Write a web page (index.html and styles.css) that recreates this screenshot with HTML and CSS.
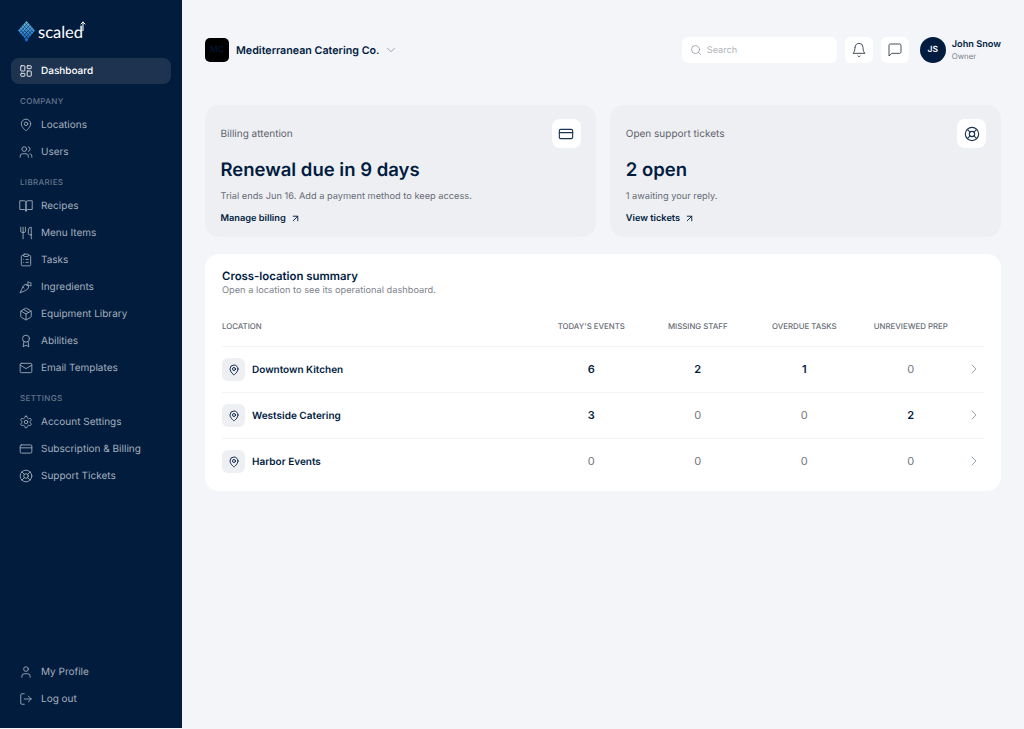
FILE: index.html
```html
<!DOCTYPE html>
<html lang="en">
<head>
    <meta charset="UTF-8">
    <meta name="viewport" content="width=device-width, initial-scale=1.0">
    <title>Dashboard</title>
    <link rel="stylesheet" href="styles.css">
</head>
<body>
    <aside class="sidebar">
        <div class="logo">
            <svg class="logo-mark" viewBox="0 0 20 22" width="17" height="21" preserveAspectRatio="none">
                <defs>
                    <linearGradient id="tile" gradientUnits="userSpaceOnUse" x1="10" y1="0" x2="10" y2="22">
                        <stop offset="0" stop-color="#6fc0dc"/>
                        <stop offset="0.55" stop-color="#3a8fd8"/>
                        <stop offset="1" stop-color="#0f62d0"/>
                    </linearGradient>
                </defs>
                <g fill="url(#tile)">
                    <path d="M10 0l1.800 1.800L10 3.600 8.200 1.800z"/>
                    <path d="M7.900 2.100l1.800 1.800-1.800 1.800-1.800-1.800zM12.100 2.100l1.800 1.800-1.800 1.800-1.800-1.800z"/>
                    <path d="M5.800 4.200l1.800 1.800-1.800 1.800L4 6zM10 4.200L11.800 6 10 7.800 8.200 6zM14.200 4.200L16 6l-1.800 1.800L12.400 6z"/>
                    <path d="M3.700 6.300l1.800 1.800-1.800 1.800-1.800-1.800zM7.900 6.300l1.800 1.800-1.800 1.800-1.800-1.800zM12.100 6.300l1.800 1.800-1.800 1.800-1.800-1.800zM16.300 6.300l1.800 1.800-1.800 1.800-1.800-1.800z"/>
                    <path d="M1.800 8.300L3.600 10l-1.800 1.800L0 10zM5.800 8.300L7.600 10l-1.800 1.800L4 10zM10 8.300l1.800 1.700-1.800 1.800L8.200 10zM14.200 8.300L16 10l-1.800 1.800-1.800-1.800zM18.200 8.300L20 10l-1.800 1.800-1.800-1.800z"/>
                    <path d="M3.700 10.400l1.800 1.800-1.800 1.800-1.800-1.800zM7.900 10.400l1.800 1.800-1.800 1.800-1.800-1.800zM12.100 10.400l1.800 1.800-1.800 1.800-1.800-1.800zM16.300 10.400l1.800 1.800-1.800 1.800-1.800-1.800z"/>
                    <path d="M5.800 12.500l1.800 1.800-1.800 1.800L4 14.300zM10 12.500l1.800 1.800-1.800 1.800-1.800-1.800zM14.200 12.500l1.800 1.800-1.800 1.800-1.800-1.800z"/>
                    <path d="M7.900 14.600l1.800 1.800-1.800 1.800-1.800-1.800zM12.100 14.600l1.800 1.800-1.800 1.800-1.800-1.800z"/>
                    <path d="M10 17l2.300 2.500L10 22l-2.300-2.500z"/>
                </g>
            </svg>
            <span class="logo-text">scaled</span>
            <svg class="logo-arrow" viewBox="0 0 6 10" width="6" height="10"><path d="M3 10V1M1 3l2-2 2 2" stroke="#fff" stroke-width="1"/></svg>
        </div>

        <nav class="nav">
            <a class="nav-item active">
                <svg class="icon" viewBox="0 0 24 24"><rect x="3" y="3" width="7" height="9" rx="1"/><rect x="14" y="3" width="7" height="5" rx="1"/><rect x="14" y="12" width="7" height="9" rx="1"/><rect x="3" y="16" width="7" height="5" rx="1"/></svg>
                Dashboard
            </a>

            <div class="nav-label">COMPANY</div>
            <a class="nav-item">
                <svg class="icon" viewBox="0 0 24 24"><path d="M20 10c0 6-8 12-8 12s-8-6-8-12a8 8 0 0 1 16 0Z"/><circle cx="12" cy="10" r="3"/></svg>
                Locations
            </a>
            <a class="nav-item">
                <svg class="icon" viewBox="0 0 24 24"><path d="M16 21v-2a4 4 0 0 0-4-4H6a4 4 0 0 0-4 4v2"/><circle cx="9" cy="7" r="4"/><path d="M22 21v-2a4 4 0 0 0-3-3.870"/><path d="M16 3.130a4 4 0 0 1 0 7.750"/></svg>
                Users
            </a>

            <div class="nav-label">LIBRARIES</div>
            <a class="nav-item">
                <svg class="icon" viewBox="0 0 24 24"><path d="M2 3h7a3 3 0 0 1 3 3v15a3 3 0 0 0-3-3H2Z"/><path d="M22 3h-7a3 3 0 0 0-3 3v15a3 3 0 0 1 3-3h7Z"/></svg>
                Recipes
            </a>
            <a class="nav-item">
                <svg class="icon" viewBox="0 0 24 24"><path d="M3 2v7c0 1.100.9 2 2 2h4a2 2 0 0 0 2-2V2"/><path d="M7 2v20"/><path d="M21 15V2a5 5 0 0 0-5 5v6c0 1.100.9 2 2 2h3Zm0 0v7"/></svg>
                Menu Items
            </a>
            <a class="nav-item">
                <svg class="icon" viewBox="0 0 24 24"><rect x="8" y="2" width="8" height="4" rx="1"/><path d="M16 4h2a2 2 0 0 1 2 2v14a2 2 0 0 1-2 2H6a2 2 0 0 1-2-2V6a2 2 0 0 1 2-2h2"/><path d="M12 11h4M12 16h4M8 11h.01M8 16h.01"/></svg>
                Tasks
            </a>
            <a class="nav-item">
                <svg class="icon" viewBox="0 0 24 24"><path d="M2.270 21.700s9.870-3.500 12.730-6.360a4.500 4.500 0 0 0-6.360-6.370C5.770 11.840 2.270 21.700 2.270 21.700Z"/><path d="M8.640 14 6.500 11.900M14.340 10l-2-2"/><path d="M15 9c.8-2 .4-3.400 0-6 2 .8 4 2.200 6 2-1 2-1 3.500 0 5-2.500-.5-4-.5-6-1Z"/></svg>
                Ingredients
            </a>
            <a class="nav-item">
                <svg class="icon" viewBox="0 0 24 24"><path d="M21 8a2 2 0 0 0-1-1.730l-7-4a2 2 0 0 0-2 0l-7 4A2 2 0 0 0 3 8v8a2 2 0 0 0 1 1.730l7 4a2 2 0 0 0 2 0l7-4A2 2 0 0 0 21 16Z"/><path d="m3.300 7 8.700 5 8.700-5M12 22V12"/><path d="m7.500 4.270 9 5.150"/></svg>
                Equipment Library
            </a>
            <a class="nav-item">
                <svg class="icon" viewBox="0 0 24 24"><circle cx="12" cy="8" r="6"/><path d="M15.480 12.890 17 22l-5-3-5 3 1.520-9.110"/></svg>
                Abilities
            </a>
            <a class="nav-item">
                <svg class="icon" viewBox="0 0 24 24"><rect x="2" y="4" width="20" height="16" rx="2"/><path d="m22 7-10 6L2 7"/></svg>
                Email Templates
            </a>

            <div class="nav-label">SETTINGS</div>
            <a class="nav-item">
                <svg class="icon" viewBox="0 0 24 24"><path d="M12.220 2h-.44a2 2 0 0 0-2 2v.18a2 2 0 0 1-1 1.730l-.43.25a2 2 0 0 1-2 0l-.15-.08a2 2 0 0 0-2.730.73l-.22.38a2 2 0 0 0 .73 2.730l.15.1a2 2 0 0 1 1 1.720v.51a2 2 0 0 1-1 1.740l-.15.09a2 2 0 0 0-.73 2.730l.22.38a2 2 0 0 0 2.730.73l.15-.08a2 2 0 0 1 2 0l.43.25a2 2 0 0 1 1 1.730V20a2 2 0 0 0 2 2h.44a2 2 0 0 0 2-2v-.18a2 2 0 0 1 1-1.730l.43-.25a2 2 0 0 1 2 0l.15.08a2 2 0 0 0 2.730-.73l.22-.39a2 2 0 0 0-.73-2.730l-.15-.08a2 2 0 0 1-1-1.740v-.5a2 2 0 0 1 1-1.740l.15-.09a2 2 0 0 0 .73-2.730l-.22-.38a2 2 0 0 0-2.730-.73l-.15.08a2 2 0 0 1-2 0l-.43-.25a2 2 0 0 1-1-1.730V4a2 2 0 0 0-2-2Z"/><circle cx="12" cy="12" r="3"/></svg>
                Account Settings
            </a>
            <a class="nav-item">
                <svg class="icon" viewBox="0 0 24 24"><rect x="2" y="5" width="20" height="14" rx="2"/><path d="M2 10h20"/></svg>
                Subscription &amp; Billing
            </a>
            <a class="nav-item">
                <svg class="icon" viewBox="0 0 24 24"><circle cx="12" cy="12" r="10"/><circle cx="12" cy="12" r="4"/><path d="m4.930 4.930 4.240 4.240M14.830 9.170l4.240-4.240M14.830 14.830l4.240 4.240M9.170 14.830l-4.240 4.240"/></svg>
                Support Tickets
            </a>
        </nav>

        <div class="nav nav-bottom">
            <a class="nav-item">
                <svg class="icon" viewBox="0 0 24 24"><path d="M19 21v-2a4 4 0 0 0-4-4H9a4 4 0 0 0-4 4v2"/><circle cx="12" cy="7" r="4"/></svg>
                My Profile
            </a>
            <a class="nav-item">
                <svg class="icon" viewBox="0 0 24 24"><path d="M9 21H5a2 2 0 0 1-2-2V5a2 2 0 0 1 2-2h4"/><path d="m16 17 5-5-5-5M21 12H9"/></svg>
                Log out
            </a>
        </div>
    </aside>

    <main class="main">
        <header class="topbar">
            <div class="company">
                <div class="company-badge">MC</div>
                <span class="company-name">Mediterranean Catering Co.</span>
                <svg class="company-caret" viewBox="0 0 24 24"><path d="m6 9 6 6 6-6"/></svg>
            </div>
            <div class="topbar-right">
                <div class="search">
                    <svg class="search-icon" viewBox="0 0 24 24"><circle cx="11" cy="11" r="8"/><path d="m21 21-4.300-4.300"/></svg>
                    <span>Search</span>
                </div>
                <button class="top-btn">
                    <svg class="top-icon" viewBox="0 0 24 24"><path d="M6 8a6 6 0 0 1 12 0c0 7 3 9 3 9H3s3-2 3-9"/><path d="M10.300 21a1.940 1.940 0 0 0 3.400 0"/></svg>
                </button>
                <button class="top-btn">
                    <svg class="top-icon" viewBox="0 0 24 24"><path d="M21 15a2 2 0 0 1-2 2H7l-4 4V5a2 2 0 0 1 2-2h14a2 2 0 0 1 2 2z"/></svg>
                </button>
                <div class="user">
                    <div class="avatar">JS</div>
                    <div>
                        <div class="user-name">John Snow</div>
                        <div class="user-role">Owner</div>
                    </div>
                </div>
            </div>
        </header>

        <section class="cards">
            <div class="card">
                <div class="card-head">
                    <span class="card-label">Billing attention</span>
                    <div class="card-icon">
                        <svg class="card-svg" viewBox="0 0 24 24"><rect x="2" y="5" width="20" height="14" rx="2"/><path d="M2 10h20"/></svg>
                    </div>
                </div>
                <div class="card-title">Renewal due in 9 days</div>
                <div class="card-text">Trial ends Jun 16. Add a payment method to keep access.</div>
                <a class="card-link">Manage billing
                    <svg class="link-arrow" viewBox="0 0 24 24"><path d="M7 7h10v10M7 17 17 7"/></svg>
                </a>
            </div>
            <div class="card">
                <div class="card-head">
                    <span class="card-label">Open support tickets</span>
                    <div class="card-icon">
                        <svg class="card-svg" viewBox="0 0 24 24"><circle cx="12" cy="12" r="10"/><circle cx="12" cy="12" r="4"/><path d="m4.930 4.930 4.240 4.240M14.830 9.170l4.240-4.240M14.830 14.830l4.240 4.240M9.170 14.830l-4.240 4.240"/></svg>
                    </div>
                </div>
                <div class="card-title">2 open</div>
                <div class="card-text">1 awaiting your reply.</div>
                <a class="card-link">View tickets
                    <svg class="link-arrow" viewBox="0 0 24 24"><path d="M7 7h10v10M7 17 17 7"/></svg>
                </a>
            </div>
        </section>

        <section class="summary">
            <h2 class="summary-title">Cross-location summary</h2>
            <p class="summary-sub">Open a location to see its operational dashboard.</p>

            <div class="row row-head">
                <div class="cell-loc">LOCATION</div>
                <div class="cell">TODAY'S EVENTS</div>
                <div class="cell">MISSING STAFF</div>
                <div class="cell">OVERDUE TASKS</div>
                <div class="cell">UNREVIEWED PREP</div>
                <div></div>
            </div>

            <div class="row">
                <div class="cell-loc">
                    <div class="loc-icon"><svg class="loc-svg" viewBox="0 0 24 24"><path d="M20 10c0 6-8 12-8 12s-8-6-8-12a8 8 0 0 1 16 0Z"/><circle cx="12" cy="10" r="3"/></svg></div>
                    Downtown Kitchen
                </div>
                <div class="cell num hot">6</div>
                <div class="cell num hot">2</div>
                <div class="cell num hot">1</div>
                <div class="cell num">0</div>
                <svg class="chevron" viewBox="0 0 24 24"><path d="m9 18 6-6-6-6"/></svg>
            </div>
            <div class="row">
                <div class="cell-loc">
                    <div class="loc-icon"><svg class="loc-svg" viewBox="0 0 24 24"><path d="M20 10c0 6-8 12-8 12s-8-6-8-12a8 8 0 0 1 16 0Z"/><circle cx="12" cy="10" r="3"/></svg></div>
                    Westside Catering
                </div>
                <div class="cell num hot">3</div>
                <div class="cell num">0</div>
                <div class="cell num">0</div>
                <div class="cell num hot">2</div>
                <svg class="chevron" viewBox="0 0 24 24"><path d="m9 18 6-6-6-6"/></svg>
            </div>
            <div class="row">
                <div class="cell-loc">
                    <div class="loc-icon"><svg class="loc-svg" viewBox="0 0 24 24"><path d="M20 10c0 6-8 12-8 12s-8-6-8-12a8 8 0 0 1 16 0Z"/><circle cx="12" cy="10" r="3"/></svg></div>
                    Harbor Events
                </div>
                <div class="cell num">0</div>
                <div class="cell num">0</div>
                <div class="cell num">0</div>
                <div class="cell num">0</div>
                <svg class="chevron" viewBox="0 0 24 24"><path d="m9 18 6-6-6-6"/></svg>
            </div>
        </section>
    </main>
</body>
</html>
```

FILE: styles.css
```css
* {
    box-sizing: border-box;
}
body {
    margin: 0;
    height: 728px;
    display: flex;
    background-color: #f3f5f9;
    color: #011c3f;
    font-family: "Inter", "Liberation Sans", sans-serif;
    text-rendering: geometricPrecision;
    overflow: hidden;
}
svg {
    fill: none;
    stroke: currentColor;
    stroke-width: 2;
    stroke-linecap: round;
    stroke-linejoin: round;
}

/* sidebar */
.sidebar {
    width: 182px;
    flex-shrink: 0;
    background-color: #011c3d;
    padding: 19px 11px 16px;
    display: flex;
    flex-direction: column;
}
.logo {
    height: 24px;
    padding-left: 7px;
    display: flex;
    align-items: center;
    color: #ffffff;
    margin-bottom: 15px;
}
.logo-mark {
    stroke: none;
}
.logo-text {
    font-family: "Lato", sans-serif;
    font-size: 16.5px;
    line-height: 24px;
    margin-left: 3px;
    margin-top: 2px;
}
.logo-arrow {
    margin: -11px 0 0 -3.5px;
}
.nav {
    display: flex;
    flex-direction: column;
}
.nav-bottom {
    margin-top: auto;
}
.nav-item {
    height: 27px;
    padding-left: 8px;
    display: flex;
    align-items: center;
    gap: 8px;
    font-size: 10px;
    color: #a5afbd;
    border-radius: 8px;
}
.nav-item.active {
    height: 26px;
    background-color: #1d3350;
    color: #ffffff;
    font-weight: 500;
}
.icon {
    width: 14px;
    height: 14px;
    flex-shrink: 0;
    stroke-width: 1.5;
}
.nav-label {
    height: 18px;
    margin-top: 9px;
    padding-left: 9px;
    font-size: 8px;
    line-height: 17px;
    letter-spacing: 0.35px;
    color: #66768c;
    font-weight: 500;
}

/* top bar */
.main {
    flex: 1;
    padding: 37px 23px 0;
    min-width: 0;
}
.topbar {
    height: 26px;
    display: flex;
    justify-content: space-between;
    align-items: center;
}
.company {
    display: flex;
    align-items: center;
}
.company-badge {
    width: 24px;
    height: 24px;
    border-radius: 5px;
    background-color: #000000;
    color: #011c3f;
    font-size: 8.5px;
    display: flex;
    align-items: center;
    justify-content: center;
}
.company-name {
    font-size: 10.7px;
    font-weight: 600;
    margin-left: 7px;
}
.company-caret {
    width: 14px;
    height: 14px;
    margin-left: 5px;
    color: #8a94a3;
    stroke-width: 1.4;
}
.topbar-right {
    display: flex;
    align-items: center;
}
.search {
    width: 155px;
    height: 26px;
    background-color: #ffffff;
    border-radius: 6px;
    display: flex;
    align-items: center;
    padding-left: 8px;
    gap: 5px;
    font-size: 9.2px;
    color: #b0b4bb;
}
.search-icon {
    width: 12px;
    height: 12px;
    color: #8f949c;
    stroke-width: 1.5;
}
.top-btn {
    width: 28px;
    height: 26px;
    margin-left: 8px;
    padding: 0;
    border: none;
    border-radius: 6px;
    background-color: #ffffff;
    display: flex;
    align-items: center;
    justify-content: center;
    color: #3a4250;
}
.top-icon {
    width: 16px;
    height: 16px;
    stroke-width: 1.4;
}
.user {
    display: flex;
    align-items: center;
    margin-left: 11px;
    gap: 6px;
}
.avatar {
    width: 26px;
    height: 26px;
    border-radius: 50%;
    background-color: #011c3f;
    color: #ffffff;
    font-size: 8.5px;
    font-weight: 600;
    display: flex;
    align-items: center;
    justify-content: center;
}
.user-name {
    font-size: 9.2px;
    font-weight: 600;
    line-height: 11px;
}
.user-role {
    font-size: 7.8px;
    line-height: 11px;
    color: #7c828c;
    margin-top: 1px;
}

/* cards */
.cards {
    margin-top: 42px;
    display: grid;
    grid-template-columns: 1fr 1fr;
    gap: 14.5px;
}
.card {
    height: 132px;
    background-color: #eeeff2;
    border-radius: 14px;
    padding: 14px 15px 14px 15.5px;
}
.card-head {
    height: 29px;
    display: flex;
    justify-content: space-between;
    align-items: center;
}
.card-label {
    margin-top: 1px;
    font-size: 10px;
    color: #5d636e;
}
.card-icon {
    width: 29px;
    height: 29px;
    border-radius: 8px;
    background-color: #ffffff;
    display: flex;
    align-items: center;
    justify-content: center;
    color: #1b3555;
}
.card-svg {
    width: 16px;
    height: 16px;
    stroke-width: 1.7;
}
.card-title {
    margin-top: 10px;
    font-size: 18.5px;
    line-height: 24px;
    font-weight: 600;
}
.card-text {
    margin-top: 9px;
    font-size: 9.24px;
    line-height: 12px;
    color: #666c76;
}
.card-link {
    margin-top: 9.5px;
    display: flex;
    align-items: center;
    gap: 4px;
    font-size: 9.24px;
    line-height: 12px;
    font-weight: 600;
}
.link-arrow {
    width: 11px;
    height: 11px;
}

/* summary table */
.summary {
    margin-top: 17px;
    height: 237px;
    background-color: #ffffff;
    border-radius: 14px;
    padding: 15px 17px;
}
.summary-title {
    margin: 0;
    font-size: 11.38px;
    line-height: 14px;
    font-weight: 600;
}
.summary-sub {
    margin: 2px 0 0;
    font-size: 9.24px;
    line-height: 12px;
    color: #7d828b;
}
.row {
    height: 46px;
    display: grid;
    grid-template-columns: 1fr repeat(4, 106.5px) 20px;
    align-items: center;
    border-top: 1px solid #f3f4f6;
}
.row-head {
    height: 40px;
    margin-top: 9px;
    border-top: none;
    font-size: 7.82px;
    color: #676c75;
    font-weight: 500;
}
.cell-loc {
    display: flex;
    align-items: center;
    gap: 7px;
    font-size: 10px;
    font-weight: 600;
}
.row-head .cell-loc {
    font-size: 7.82px;
    font-weight: 500;
}
.cell {
    text-align: center;
}
.num {
    padding-bottom: 1px;
    font-size: 11px;
    color: #6f747c;
}
.num.hot {
    color: #011c3f;
    font-weight: 600;
}
.loc-icon {
    width: 23px;
    height: 23px;
    border-radius: 6px;
    background-color: #eeeff2;
    display: flex;
    align-items: center;
    justify-content: center;
}
.loc-svg {
    width: 12px;
    height: 12px;
    stroke-width: 1.8;
}
.chevron {
    width: 16px;
    height: 16px;
    margin-bottom: 1px;
    color: #8b95a5;
    justify-self: center;
    stroke-width: 1.3;
}
```
